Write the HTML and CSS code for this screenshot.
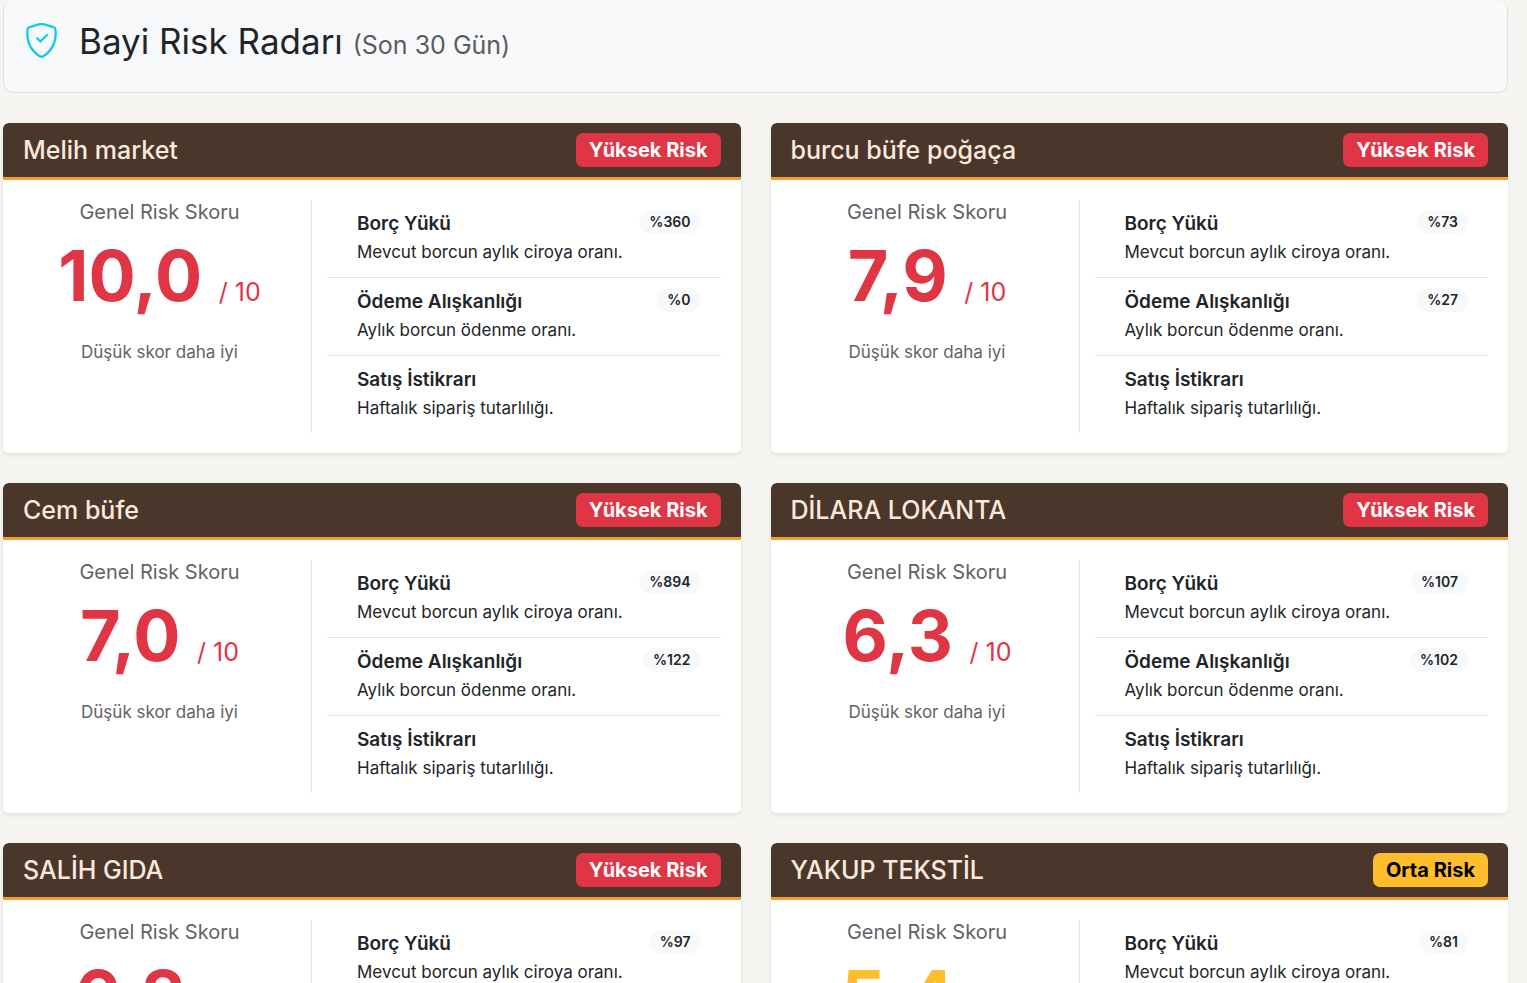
FILE: index.html
```
<!DOCTYPE html>
<html lang="tr">
<head>
<meta charset="utf-8">
<meta name="viewport" content="width=device-width, initial-scale=1">
<title>Bayi Risk Radarı</title>
<link rel="stylesheet" href="styles.css">
</head>
<body>
<main class="page">
  <header class="page-header">
    <svg class="page-icon" viewBox="0 0 16 16" fill="currentColor" aria-hidden="true">
      <path d="M5.338 1.59a61 61 0 0 0-2.837.856.48.48 0 0 0-.328.39c-.554 4.157.726 7.19 2.253 9.188a10.7 10.7 0 0 0 2.287 2.233c.346.244.652.42.893.533q.18.085.293.118a1 1 0 0 0 .101.025 1 1 0 0 0 .1-.025q.114-.034.294-.118c.24-.113.547-.29.893-.533a10.7 10.7 0 0 0 2.287-2.233c1.527-1.997 2.807-5.031 2.253-9.188a.48.48 0 0 0-.328-.39c-.651-.213-1.75-.56-2.837-.855C9.552 1.29 8.531 1.067 8 1.067c-.53 0-1.552.223-2.662.524zM5.072.56C6.157.265 7.31 0 8 0s1.843.265 2.928.56c1.11.3 2.229.655 2.887.87a1.54 1.54 0 0 1 1.044 1.262c.596 4.477-.787 7.795-2.465 9.99a11.8 11.8 0 0 1-2.517 2.453 7 7 0 0 1-1.048.625c-.28.132-.581.24-.829.24s-.548-.108-.829-.24a7 7 0 0 1-1.048-.625 11.8 11.8 0 0 1-2.517-2.453C1.928 10.487.545 7.169 1.141 2.692A1.54 1.54 0 0 1 2.185 1.43 63 63 0 0 1 5.072.56"/>
      <path d="M10.854 5.146a.5.5 0 0 1 0 .708l-3 3a.5.5 0 0 1-.708 0l-1.5-1.5a.5.5 0 1 1 .708-.708L7.5 7.793l2.646-2.647a.5.5 0 0 1 .708 0"/>
    </svg>
    <h1 class="page-title">Bayi Risk Radarı <small class="page-period">(Son 30 Gün)</small></h1>
  </header>

  <section class="card-grid">
    <article class="card">
      <header class="card-header"><h2 class="card-title">Melih market</h2><span class="badge badge-high">Yüksek Risk</span></header>
      <div class="card-body">
        <div class="score">
          <h3 class="score-label">Genel Risk Skoru</h3>
          <p class="score-value score-high">10,0 <span class="score-max">/ 10</span></p>
          <p class="score-hint">Düşük skor daha iyi</p>
        </div>
        <ul class="metrics">
          <li class="metric"><div><strong class="metric-name">Borç Yükü</strong><p class="metric-text">Mevcut borcun aylık ciroya oranı.</p></div><span class="pill">%360</span></li>
          <li class="metric"><div><strong class="metric-name">Ödeme Alışkanlığı</strong><p class="metric-text">Aylık borcun ödenme oranı.</p></div><span class="pill">%0</span></li>
          <li class="metric"><div><strong class="metric-name">Satış İstikrarı</strong><p class="metric-text">Haftalık sipariş tutarlılığı.</p></div></li>
        </ul>
      </div>
    </article>

    <article class="card">
      <header class="card-header"><h2 class="card-title">burcu büfe poğaça</h2><span class="badge badge-high">Yüksek Risk</span></header>
      <div class="card-body">
        <div class="score">
          <h3 class="score-label">Genel Risk Skoru</h3>
          <p class="score-value score-high">7,9 <span class="score-max">/ 10</span></p>
          <p class="score-hint">Düşük skor daha iyi</p>
        </div>
        <ul class="metrics">
          <li class="metric"><div><strong class="metric-name">Borç Yükü</strong><p class="metric-text">Mevcut borcun aylık ciroya oranı.</p></div><span class="pill">%73</span></li>
          <li class="metric"><div><strong class="metric-name">Ödeme Alışkanlığı</strong><p class="metric-text">Aylık borcun ödenme oranı.</p></div><span class="pill">%27</span></li>
          <li class="metric"><div><strong class="metric-name">Satış İstikrarı</strong><p class="metric-text">Haftalık sipariş tutarlılığı.</p></div></li>
        </ul>
      </div>
    </article>

    <article class="card">
      <header class="card-header"><h2 class="card-title">Cem büfe</h2><span class="badge badge-high">Yüksek Risk</span></header>
      <div class="card-body">
        <div class="score">
          <h3 class="score-label">Genel Risk Skoru</h3>
          <p class="score-value score-high">7,0 <span class="score-max">/ 10</span></p>
          <p class="score-hint">Düşük skor daha iyi</p>
        </div>
        <ul class="metrics">
          <li class="metric"><div><strong class="metric-name">Borç Yükü</strong><p class="metric-text">Mevcut borcun aylık ciroya oranı.</p></div><span class="pill">%894</span></li>
          <li class="metric"><div><strong class="metric-name">Ödeme Alışkanlığı</strong><p class="metric-text">Aylık borcun ödenme oranı.</p></div><span class="pill">%122</span></li>
          <li class="metric"><div><strong class="metric-name">Satış İstikrarı</strong><p class="metric-text">Haftalık sipariş tutarlılığı.</p></div></li>
        </ul>
      </div>
    </article>

    <article class="card">
      <header class="card-header"><h2 class="card-title">DİLARA LOKANTA</h2><span class="badge badge-high">Yüksek Risk</span></header>
      <div class="card-body">
        <div class="score">
          <h3 class="score-label">Genel Risk Skoru</h3>
          <p class="score-value score-high">6,3 <span class="score-max">/ 10</span></p>
          <p class="score-hint">Düşük skor daha iyi</p>
        </div>
        <ul class="metrics">
          <li class="metric"><div><strong class="metric-name">Borç Yükü</strong><p class="metric-text">Mevcut borcun aylık ciroya oranı.</p></div><span class="pill">%107</span></li>
          <li class="metric"><div><strong class="metric-name">Ödeme Alışkanlığı</strong><p class="metric-text">Aylık borcun ödenme oranı.</p></div><span class="pill">%102</span></li>
          <li class="metric"><div><strong class="metric-name">Satış İstikrarı</strong><p class="metric-text">Haftalık sipariş tutarlılığı.</p></div></li>
        </ul>
      </div>
    </article>

    <article class="card">
      <header class="card-header"><h2 class="card-title">SALİH GIDA</h2><span class="badge badge-high">Yüksek Risk</span></header>
      <div class="card-body">
        <div class="score">
          <h3 class="score-label">Genel Risk Skoru</h3>
          <p class="score-value score-high">6,2 <span class="score-max">/ 10</span></p>
          <p class="score-hint">Düşük skor daha iyi</p>
        </div>
        <ul class="metrics">
          <li class="metric"><div><strong class="metric-name">Borç Yükü</strong><p class="metric-text">Mevcut borcun aylık ciroya oranı.</p></div><span class="pill">%97</span></li>
        </ul>
      </div>
    </article>

    <article class="card">
      <header class="card-header"><h2 class="card-title">YAKUP TEKSTİL</h2><span class="badge badge-medium">Orta Risk</span></header>
      <div class="card-body">
        <div class="score">
          <h3 class="score-label">Genel Risk Skoru</h3>
          <p class="score-value score-medium">5,4 <span class="score-max">/ 10</span></p>
          <p class="score-hint">Düşük skor daha iyi</p>
        </div>
        <ul class="metrics">
          <li class="metric"><div><strong class="metric-name">Borç Yükü</strong><p class="metric-text">Mevcut borcun aylık ciroya oranı.</p></div><span class="pill">%81</span></li>
        </ul>
      </div>
    </article>
  </section>
</main>
</body>
</html>
```

FILE: styles.css
```
* { box-sizing: border-box; }

html { scrollbar-width: none; }

body {
  margin: 0;
  background: #f7f5f2;
  color: #212529;
  font-family: Inter, "Liberation Sans", sans-serif;
  font-size: 17px;
  line-height: 24px;
}

h1, h2, h3, p, ul { margin: 0; padding: 0; }

.page { padding: 0 19px 30px 3px; }

.page-header {
  display: flex;
  align-items: flex-start;
  gap: 20px;
  margin-bottom: 30px;
  padding: 20px 20px 30px;
  border: 1px solid #dee2e6;
  border-top: 0;
  border-radius: 10px;
  background: #f8f9fb;
}

.page-icon {
  flex: none;
  width: 35px;
  height: 35px;
  margin-top: 3px;
  color: #0dcaf0;
}

.page-title {
  font-size: 35px;
  font-weight: 400;
  line-height: 42px;
}

.page-period {
  color: #5a5c5e;
  font-size: 25px;
  line-height: 30px;
}

.card-grid {
  display: grid;
  grid-template-columns: 1fr 1fr;
  gap: 30px;
}

.card {
  overflow: hidden;
  border-radius: 6px;
  background: #fff;
  box-shadow: 0 2px 5px rgba(0, 0, 0, 0.08);
}

.card-header {
  display: flex;
  align-items: center;
  justify-content: space-between;
  padding: 10px 20px;
  border-bottom: 3px solid #f0a028;
  background: #4b362c;
}

.card-title {
  color: #f8eadb;
  font-size: 25px;
  font-weight: 500;
  line-height: 30px;
}

.badge {
  padding: 7px 13px;
  border-radius: 7px;
  font-size: 20px;
  font-weight: 700;
  line-height: 20px;
}

.badge-high { background: #e03545; color: #fff; }
.badge-medium { background: #ffbe2c; color: #000; }

.card-body {
  display: grid;
  grid-template-columns: 289px 1fr;
  gap: 15px;
  min-height: 273px;
  padding: 20px;
}

.score {
  padding-right: 15px;
  border-right: 1px solid #dee2e6;
  text-align: center;
}

.score-label {
  color: #5f6366;
  font-size: 20px;
  font-weight: 400;
  line-height: 24px;
}

.score-value {
  margin: 16px 0 28px;
  font-size: 70px;
  font-weight: 700;
  line-height: 72px;
}

.score-high { color: #e03545; }
.score-medium { color: #ffbe2c; }

.score-max {
  font-size: 25px;
  font-weight: 400;
  line-height: 30px;
}

.score-hint { color: #5f6366; }

.metrics { list-style: none; }

.metric {
  display: flex;
  align-items: flex-start;
  justify-content: space-between;
  padding: 10px 20px 10px 30px;
}

.metric + .metric { border-top: 1px solid #dee2e6; }

.metric-name {
  display: block;
  font-size: 19px;
  font-weight: 600;
  line-height: 28px;
}

.metric-text { line-height: 29px; }

.pill {
  padding: 5px 10px;
  border-radius: 12px;
  background: #f8f9fb;
  font-size: 14px;
  font-weight: 600;
  line-height: 14px;
}
```
